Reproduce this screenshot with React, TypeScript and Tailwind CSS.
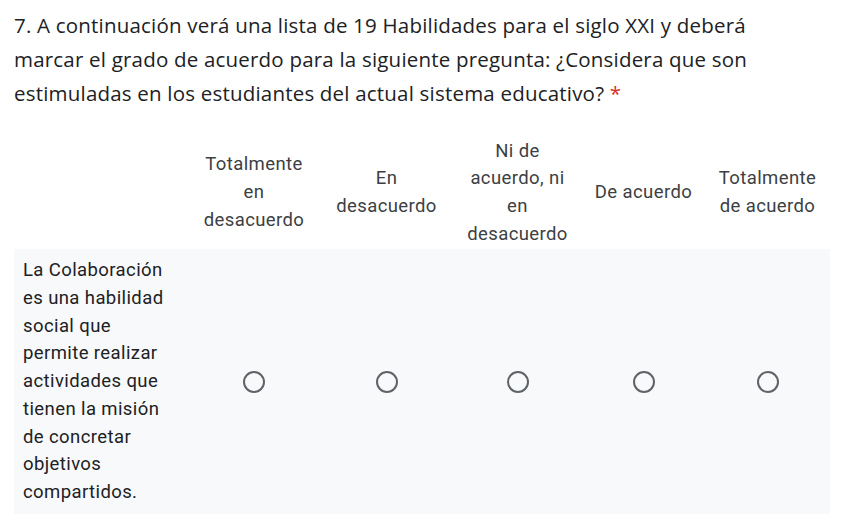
const columns = [
  ["Totalmente", "en", "desacuerdo"],
  ["En", "desacuerdo"],
  ["Ni de", "acuerdo, ni", "en", "desacuerdo"],
  ["De acuerdo"],
  ["Totalmente", "de acuerdo"],
];

const labelLines = [
  "La Colaboración",
  "es una habilidad",
  "social que",
  "permite realizar",
  "actividades que",
  "tienen la misión",
  "de concretar",
  "objetivos",
  "compartidos.",
];

function Radio() {
  return <div className="w-[22px] h-[22px] rounded-full border-2 border-[#5f6368]" />;
}

export default function App() {
  return (
    <div className="w-[844px] h-[526px] bg-white overflow-hidden">
      {/* Question title */}
      <div
        className="pl-[14px] pt-[8px] text-[20.5px] leading-[34px] tracking-[0.2px] text-[#202124]"
        style={{ fontFamily: '"Open Sans", sans-serif' }}
      >
        <div className="whitespace-nowrap">
          7. A continuación verá una lista de 19 Habilidades para el siglo XXI y deberá
        </div>
        <div className="whitespace-nowrap">
          marcar el grado de acuerdo para la siguiente pregunta: ¿Considera que son
        </div>
        <div className="whitespace-nowrap">
          estimuladas en los estudiantes del actual sistema educativo?{" "}
          <span className="text-[#d93025]">*</span>
        </div>
      </div>

      {/* Grid */}
      <div
        className="mt-[25px] mx-[14px] text-[18.5px] leading-[27.7px] tracking-[0.4px] text-[#3c4043]"
        style={{ fontFamily: "Roboto, sans-serif" }}
      >
        <div className="grid grid-cols-[174px_132px_133px_129px_123px_125px] h-[114px] items-center">
          <div />
          {columns.map((lines, i) => (
            <div key={i} className="text-center whitespace-nowrap pt-[2px]">
              {lines.map((l, j) => (
                <div key={j}>{l}</div>
              ))}
            </div>
          ))}
        </div>
        <div className="grid grid-cols-[174px_132px_133px_129px_123px_125px] items-center bg-[#f8f9fa] h-[265px]">
          <div className="pl-[9px] pt-[1px] text-[#202124] whitespace-nowrap">
            {labelLines.map((l, j) => (
              <div key={j}>{l}</div>
            ))}
          </div>
          {columns.map((_, i) => (
            <div key={i} className="flex justify-center">
              <Radio />
            </div>
          ))}
        </div>
      </div>
    </div>
  );
}
